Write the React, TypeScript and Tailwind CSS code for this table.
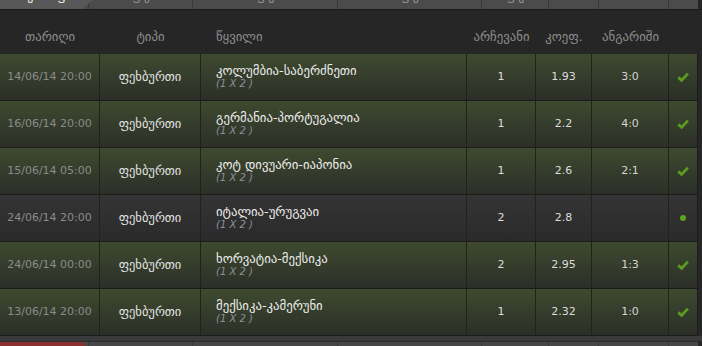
import React from "react";

type Row = {
  date: string;
  match: string;
  pick: string;
  coef: string;
  score: string;
  won: boolean;
};

const rows: Row[] = [
  { date: "14/06/14 20:00", match: "კოლუმბია-საბერძნეთი", pick: "1", coef: "1.93", score: "3:0", won: true },
  { date: "16/06/14 20:00", match: "გერმანია-პორტუგალია", pick: "1", coef: "2.2", score: "4:0", won: true },
  { date: "15/06/14 05:00", match: "კოტ დივუარი-იაპონია", pick: "1", coef: "2.6", score: "2:1", won: true },
  { date: "24/06/14 20:00", match: "იტალია-ურუგვაი", pick: "2", coef: "2.8", score: "", won: false },
  { date: "24/06/14 00:00", match: "ხორვატია-მექსიკა", pick: "2", coef: "2.95", score: "1:3", won: true },
  { date: "13/06/14 20:00", match: "მექსიკა-კამერუნი", pick: "1", coef: "2.32", score: "1:0", won: true },
];

const cols = "grid grid-cols-[100px_101px_266px_69px_56px_77px_29px] w-[698px]";

const Check = () => (
  <svg width="12" height="10" viewBox="0 0 12 10">
    <path d="M1.3 5.4 L4.6 8.4 L10.9 1.6" fill="none" stroke="#5a9c1f" strokeWidth="2.8" />
  </svg>
);

const TabStrip = ({ bottom }: { bottom?: boolean }) => {
  const tabs = [104, 145, 144, 67, 50, 70, 30];
  return (
    <div className={`flex overflow-hidden ${bottom ? "h-[6px] border-t border-[#2c2c2c]" : "h-[9px]"}`}>
      <div className={`w-[88px] shrink-0 ${bottom ? "bg-[#4a4a4a]" : "bg-[#4b4b4b]"}`}>
        <div
          className={`h-full w-[93px] ${
            bottom
              ? "bg-[#8b2f2f] [clip-path:polygon(0_0,88%_0,93%_100%,0_100%)]"
              : "bg-[#585858] [clip-path:polygon(0_0,100%_0,88%_100%,0_100%)]"
          } flex justify-around px-4 text-[11px] text-white leading-none`}
        >
          {!bottom && (
            <>
              <span className="-mt-[9px]">ჟ</span>
              <span className="-mt-[9px]">ფ</span>
            </>
          )}
        </div>
      </div>
      {tabs.map((w, i) => (
        <div
          key={i}
          style={{ width: w }}
          className={`shrink-0 border-l border-[#3a3a3a] ${bottom ? "bg-[#474747]" : "bg-[#4b4b4b]"} flex justify-center text-[11px] leading-none text-[#9a9a9a]`}
        >
          {!bottom && i < 4 && <span className="-mt-[9px]">ფ ყ</span>}
        </div>
      ))}
    </div>
  );
};

export default function App() {
  return (
    <div className="w-[702px] h-[346px] overflow-hidden bg-[#262626] font-['DejaVu_Sans',sans-serif]">
      <TabStrip />
      <div className="h-px bg-[#1b1b1b]" />

      {/* header */}
      <div className={`${cols} h-[44px] items-end pb-[8px] text-[12.75px] text-[#8d8d8d]`}>
        <div className="text-center">თარიღი</div>
        <div className="text-center">ტიპი</div>
        <div className="pl-[15px]">წყვილი</div>
        <div className="text-center">არჩევანი</div>
        <div className="text-center">კოეფ.</div>
        <div className="text-center">ანგარიში</div>
        <div />
      </div>

      {/* rows */}
      {rows.map((r, i) => (
        <div
          key={i}
          className={`${cols} h-[47px] border-b border-[#1c1c1c] bg-linear-to-b ${
            r.won ? "from-[#3e4a2f] to-[#2c2f28]" : "from-[#343434] to-[#2a2a2a]"
          }`}
        >
          <div className="flex items-center justify-center border-r border-[#202318] text-[11px] text-[#8b8b8b]">
            {r.date}
          </div>
          <div className="flex items-center justify-center border-r border-[#202318] text-[12.5px] text-[#e4e4e4]">
            ფეხბურთი
          </div>
          <div className="flex flex-col justify-center border-r border-[#202318] pl-[15px]">
            <span className="text-[12.75px] leading-[14px] text-[#ececec]">{r.match}</span>
            <span className="text-[10px] leading-[12px] italic text-[#8a909c]">(1 X 2 )</span>
          </div>
          <div className="flex items-center justify-center border-r border-[#202318] text-[11px] text-[#dcdcdc]">
            {r.pick}
          </div>
          <div className="flex items-center justify-center border-r border-[#202318] text-[11px] text-[#dcdcdc]">
            {r.coef}
          </div>
          <div className="flex items-center justify-center border-r border-[#202318] text-[11px] text-[#d4d4d4]">
            {r.score}
          </div>
          <div className="flex items-center justify-center border-r border-[#1c1c1c]">
            {r.won ? <Check /> : <span className="w-[6px] h-[6px] rounded-full bg-[#5aa51c]" />}
          </div>
        </div>
      ))}

      <div className="h-[5px] bg-[#3a3a3a]" />
      <TabStrip bottom />
    </div>
  );
}
